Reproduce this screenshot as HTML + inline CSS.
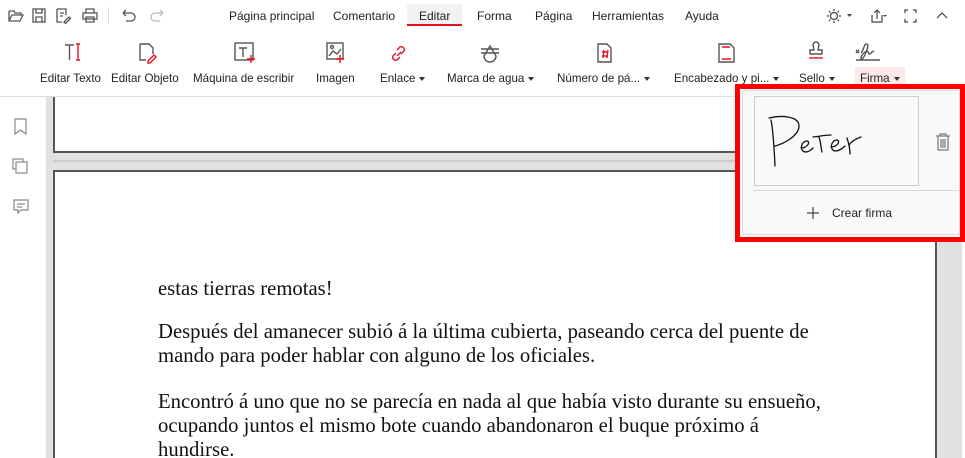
<!DOCTYPE html>
<html><head><meta charset="utf-8"><style>
*{margin:0;padding:0;box-sizing:border-box}
html,body{width:965px;height:458px;overflow:hidden}
body{background:#fff;font-family:"Liberation Sans",sans-serif;position:relative;color:#222}
.a{position:absolute}
.menu{top:9px;font-size:12px;color:#222}
.lbl{top:72px;font-size:11.6px;color:#222;white-space:nowrap}
.tri{display:inline-block;width:0;height:0;border-left:3.5px solid transparent;border-right:3.5px solid transparent;border-top:4px solid #333;vertical-align:middle;margin-left:4px}
svg{position:absolute;overflow:visible}
.t{position:absolute;left:158px;font-family:"Liberation Serif",serif;font-size:20.7px;color:#111;line-height:24px;white-space:nowrap}
</style></head><body>
<svg style="left:8px;top:8px" width="110" height="16" fill="none" stroke="#555" stroke-width="1.3">
<path d="M1 3h5l1 2h6v2M1 3v10h11l3-6H4l-3 6"/>
<rect x="25" y="1" width="12" height="13"/><path d="M28 1v4h6V1M28 14v-5h6v5"/>
<path d="M49 1h9v6M49 1v13h5M52 5h4M52 8h3M56 14l5-5 1.5 1.5-5 5z"/>
<rect x="75" y="5" width="14" height="6"/><path d="M78 5V1h8v4M78 9h8v5h-8z"/>
</svg>
<div class="a" style="left:108px;top:7px;width:1px;height:17px;background:#ddd"></div>
<svg style="left:121px;top:8px" width="50" height="16" fill="none" stroke-width="1.3"><path stroke="#555" d="M2 5h8a4 4 0 010 8H5M2 5l3-3M2 5l3 3"/><path stroke="#bbb" d="M42 5h-8a4 4 0 000 8h5M42 5l-3-3M42 5l-3 3"/></svg>
<div class="a menu" style="left:229px">Página principal</div>
<div class="a menu" style="left:333px">Comentario</div>
<div class="a" style="left:407px;top:4px;width:55px;height:22px;background:#f2f2f2"></div>
<div class="a menu" style="left:419px">Editar</div>
<div class="a" style="left:407px;top:24px;width:55px;height:2px;background:#e81123"></div>
<div class="a menu" style="left:477px">Forma</div>
<div class="a menu" style="left:535px">Página</div>
<div class="a menu" style="left:592px">Herramientas</div>
<div class="a menu" style="left:685px">Ayuda</div>
<svg style="left:826px;top:8px" width="120" height="16" fill="none" stroke="#444" stroke-width="1.2">
<circle cx="8" cy="8" r="3.5"/><path d="M8 1v2M8 13v2M1 8h2M13 8h2M3 3l1.5 1.5M11.5 11.5L13 13M3 13l1.5-1.5M11.5 4.5L13 3"/>
<path fill="#444" stroke="none" d="M21 6h5l-2.5 3z"/>
<path d="M46 7v7h10V7M51 11V2M48 5l3-3 3 3"/><path fill="#444" stroke="none" d="M57 7h4l-2 2z"/>
<path d="M79 5V2h3M87 2h3v3M79 11v3h3M87 14h3v-3"/>
<path d="M111 10l5-5 5 5"/>
</svg>
<svg style="left:60px;top:42px" width="860" height="26" fill="none" stroke-width="1.4">
<path stroke="#555" d="M5 3h9M9.5 3v15"/><path stroke="#e81123" d="M18 2v16M16 2h4M16 18h4"/>
<path stroke="#555" d="M80 2h9l4 4v6M80 2v16h6"/><path stroke="#e81123" d="M88 19l6-6 2 2-6 6h-2z"/>
<rect stroke="#555" x="175" y="1" width="18" height="17"/><path stroke="#555" d="M179 6h8M183 6v9"/><path stroke="#e81123" d="M191 13v8M187 17h8"/>
<rect stroke="#555" x="267" y="1" width="16" height="16"/><path stroke="#555" d="M269 14l4-5 4 3 4-5"/><circle stroke="#555" cx="272" cy="5" r="1.5"/><path stroke="#e81123" d="M280 13v8M276 17h8"/>
<path stroke="#e81123" d="M337 8l3-3a3 3 0 014 4l-3 3M340 15l-3 3a3 3 0 01-4-4l3-3M337 14l4-4"/>
<path stroke="#555" d="M421 7h18M421 11h18M424 14a6 6 0 0012 0l-6-10z"/>
<path stroke="#555" d="M538 2h9l4 4v14h-13z"/><path stroke="#e81123" d="M542 10h6M542 14h6M544 8l-1 8M548 8l-1 8"/>
<path stroke="#555" d="M659 2h11l4 4v14h-15z"/><path stroke="#e81123" d="M662 5h8M662 17h9"/>
<path stroke="#555" d="M753 3a3 3 0 016 0l-1 5h4v4h-12v-4h4z"/><path stroke="#e81123" d="M749 16h14"/>
<path stroke="#555" d="M796 8l3 3M799 8l-3 3M801 11c3-3 3-10 6-9s-3 14-5 15-1-4 3-7 3 3 5 2 2-4 4-2M796 18h24"/>
</svg>
<div class="a lbl" style="left:40px">Editar Texto</div>
<div class="a lbl" style="left:111px">Editar Objeto</div>
<div class="a lbl" style="left:193px">Máquina de escribir</div>
<div class="a lbl" style="left:316px">Imagen</div>
<div class="a lbl" style="left:380px">Enlace<span class="tri"></span></div>
<div class="a lbl" style="left:447px">Marca de agua<span class="tri"></span></div>
<div class="a lbl" style="left:557px">Número de pá...<span class="tri"></span></div>
<div class="a lbl" style="left:674px">Encabezado y pi...<span class="tri"></span></div>
<div class="a" style="left:855px;top:67px;width:50px;height:21px;background:#fde8ea"></div>
<div class="a lbl" style="left:799px">Sello<span class="tri"></span></div>
<div class="a lbl" style="left:860px">Firma<span class="tri"></span></div>
<div class="a" style="left:0;top:96px;width:965px;height:1px;background:#ddd"></div>
<svg style="left:12px;top:118px" width="20" height="100" fill="none" stroke="#888" stroke-width="1.2">
<path d="M3 1h11v15l-5.5-4L3 16z"/>
<rect x="1" y="41" width="10" height="10"/><rect x="4" y="44" width="11" height="11" fill="#fff"/>
<path d="M2 82h14v10H9l-3 3v-3H2zM5 86h8M5 89h5"/>
</svg>
<div class="a" style="left:46px;top:97px;width:916px;height:361px;background:#e1e1e1"></div>
<div class="a" style="left:53px;top:97px;width:884px;height:56px;background:#fff;border:2px solid #555;border-top:none"></div>
<div class="a" style="left:53px;top:160px;width:884px;height:2px;background:#cbcbcb"></div>
<div class="a" style="left:53px;top:170px;width:884px;height:288px;background:#fff;border:2px solid #555;border-bottom:none"></div>
<div class="t" style="top:277px">estas tierras remotas!</div>
<div class="t" style="top:320px">Después del amanecer subió á la última cubierta, paseando cerca del puente de<br>mando para poder hablar con alguno de los oficiales.</div>
<div class="t" style="top:390px">Encontró á uno que no se parecía en nada al que había visto durante su ensueño,<br>ocupando juntos el mismo bote cuando abandonaron el buque próximo á<br>hundirse.</div>
<div class="a" style="left:735px;top:84px;width:230px;height:158px;border:5px solid #f00;background:#f9f9fb"></div>
<div class="a" style="left:742px;top:90px;width:218px;height:145px;border:1px solid #ddd;background:#f9f9fb"></div>
<div class="a" style="left:754px;top:96px;width:165px;height:90px;border:1px solid #ccc;background:#f9f9fb"></div>
<svg style="left:765px;top:112px" width="120" height="60" fill="none" stroke="#111" stroke-width="1.3" stroke-linecap="round">
<path d="M6 8c2 10 3 25 4 46M4 6c12-3 30-2 30 8s-16 18-24 20"/>
<path d="M36 36c6 0 10-6 6-7-6 0-8 10-2 11 4 0 6-2 8-4"/>
<path d="M54 25c2 6 2 12 3 15M48 25c8-1 14-2 18-2"/>
<path d="M66 35c6 0 10-6 6-7-6 0-8 10-2 11 4 0 8-3 10-5"/>
<path d="M82 26c2 6 3 10 3 16M84 33c2-3 6-6 12-8"/>
</svg>
<svg style="left:935px;top:133px" width="16" height="18" fill="none" stroke="#777" stroke-width="1.2"><path d="M1 3h14M5 3V1h6v2M3 3v14h10V3M6 6v9M8 6v9M10 6v9"/></svg>
<div class="a" style="left:753px;top:190px;width:207px;height:1px;background:#d8d8d8"></div>
<svg style="left:806px;top:206px" width="14" height="14" stroke="#444" stroke-width="1.2"><path d="M7 1v12M1 7h12"/></svg>
<div class="a" style="left:832px;top:206px;font-size:12px;color:#222">Crear firma</div>
</body></html>
